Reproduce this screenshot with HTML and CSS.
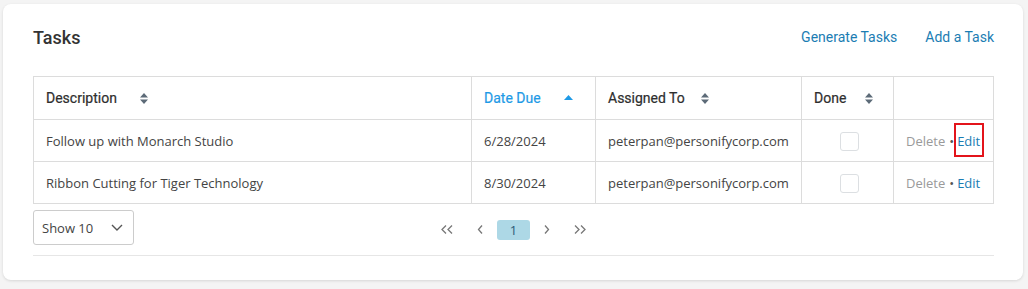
FILE: index.html
```html
<!DOCTYPE html>
<html lang="en">
  <head>
    <meta charset="UTF-8" />
    <meta name="viewport" content="width=device-width, initial-scale=1.0" />
    <title>Tasks</title>
    <link rel="stylesheet" href="styles.css">
  </head>
  <body>
    <div class="card">
      <div class="card-head">
        <h2 class="title">Tasks</h2>
        <div class="head-links">
          <a class="link" href="#">Generate Tasks</a>
          <a class="link" href="#">Add a Task</a>
        </div>
      </div>

      <table class="tasks">
        <colgroup>
          <col class="c-desc" />
          <col class="c-date" />
          <col class="c-user" />
          <col class="c-done" />
          <col class="c-act" />
        </colgroup>
        <thead>
          <tr>
            <th>Description<svg class="sort s-desc" width="8" height="11" viewBox="0 0 8 11"><path d="M4 0 L8 4.5 L0 4.5 Z M0 6.5 L8 6.5 L4 11 Z" /></svg></th>
            <th class="sorted">Date Due<svg class="sort asc" width="9" height="6" viewBox="0 0 9 6"><path d="M4.5 0 L9 5 L0 5 Z" /></svg></th>
            <th>Assigned To<svg class="sort s-user" width="8" height="11" viewBox="0 0 8 11"><path d="M4 0 L8 4.5 L0 4.5 Z M0 6.5 L8 6.5 L4 11 Z" /></svg></th>
            <th>Done<svg class="sort s-done" width="8" height="11" viewBox="0 0 8 11"><path d="M4 0 L8 4.5 L0 4.5 Z M0 6.5 L8 6.5 L4 11 Z" /></svg></th>
            <th></th>
          </tr>
        </thead>
        <tbody>
          <tr>
            <td>Follow up with Monarch Studio</td>
            <td>6/28/2024</td>
            <td>peterpan@personifycorp.com</td>
            <td class="done"><span class="check"></span></td>
            <td class="actions"><a class="del" href="#">Delete</a><span class="dot">•</span><a class="edit marked" href="#">Edit</a></td>
          </tr>
          <tr>
            <td>Ribbon Cutting for Tiger Technology</td>
            <td>8/30/2024</td>
            <td>peterpan@personifycorp.com</td>
            <td class="done"><span class="check"></span></td>
            <td class="actions"><a class="del" href="#">Delete</a><span class="dot">•</span><a class="edit" href="#">Edit</a></td>
          </tr>
        </tbody>
      </table>

      <div class="table-foot">
        <div class="page-size">
          <span>Show 10</span>
          <svg width="12" height="7" viewBox="0 0 12 7"><polyline points="1,1 6,6 11,1" /></svg>
        </div>
        <div class="pager">
          <span class="pg"><svg width="13" height="9" viewBox="0 0 13 9"><polyline points="5,0.5 1,4.5 5,8.5" /><polyline points="11,0.5 7,4.5 11,8.5" /></svg></span>
          <span class="pg"><svg width="7" height="9" viewBox="0 0 7 9"><polyline points="5,0.5 1.5,4.5 5,8.5" /></svg></span>
          <span class="pg current">1</span>
          <span class="pg"><svg width="7" height="9" viewBox="0 0 7 9"><polyline points="2,0.5 5.5,4.5 2,8.5" /></svg></span>
          <span class="pg"><svg width="13" height="9" viewBox="0 0 13 9"><polyline points="2,0.5 6,4.5 2,8.5" /><polyline points="8,0.5 12,4.5 8,8.5" /></svg></span>
        </div>
        <div></div>
      </div>
      <hr class="rule" />
    </div>
  </body>
</html>
```

FILE: styles.css
```css
body {
  margin: 0;
  padding: 4px 5px 9px 3px;
  background-color: #f4f4f4;
  font-family: "Open Sans", "Liberation Sans", sans-serif;
  color: #444;
}
.card {
  background: #fff;
  border-radius: 8px;
  box-shadow: 0 1px 3px rgba(0, 0, 0, 0.12);
  padding: 22px 29px 24px 30px;
}
.card-head {
  display: flex;
  align-items: center;
  justify-content: space-between;
  height: 22px;
  margin-bottom: 28px;
}
.title {
  margin: 0;
  font-family: Roboto, "Liberation Sans", sans-serif;
  font-size: 18px;
  font-weight: 500;
  color: #333;
}
.head-links {
  display: flex;
  gap: 28px;
}
.link {
  font-family: Roboto, "Liberation Sans", sans-serif;
  font-size: 14px;
  color: #1b7db3;
  text-decoration: none;
}

/* table */
.tasks {
  width: 100%;
  border-collapse: collapse;
  table-layout: fixed;
}
.c-desc { width: 438px; }
.c-date { width: 124px; }
.c-user { width: 206px; }
.c-done { width: 92px; }
.tasks th,
.tasks td {
  border: 1px solid #dcdcdc;
  padding: 0 12px;
  text-align: left;
  white-space: nowrap;
}
.tasks th {
  height: 42px;
  font-family: Roboto, "Liberation Sans", sans-serif;
  font-size: 14px;
  font-weight: 400;
  color: #2e2e2e;
  -webkit-text-stroke: 0.2px #2e2e2e;
}
.tasks td {
  height: 41px;
  font-size: 13px;
  color: #444;
}
.sort {
  margin-left: 24px;
  vertical-align: -1px;
  fill: #5d6b78;
  stroke: none;
}
.s-desc { margin-left: 23px; }
.s-user { margin-left: 16px; }
.s-done { margin-left: 19px; }
.sorted {
  color: #1e9ae6 !important;
  -webkit-text-stroke: 0.2px #1e9ae6 !important;
}
.sort.asc {
  margin-left: 23px;
  vertical-align: 2px;
  fill: #1e9ae6;
}
.done {
  text-align: center !important;
}
.check {
  display: inline-block;
  width: 17px;
  height: 17px;
  border: 1.5px solid #dcdfe2;
  border-radius: 3px;
  vertical-align: middle;
  margin-left: 3px;
}
.actions a {
  text-decoration: none;
}
.del {
  color: #9a9a9a;
}
.dot {
  color: #555;
  margin: 0 3px 0 4px;
  font-size: 13px;
}
.edit {
  color: #1b7db3;
  position: relative;
}
/* highlight box drawn over the first Edit link */
.marked::after {
  content: "";
  position: absolute;
  left: -3px;
  right: -4px;
  top: -9px;
  bottom: -7px;
  border: 2px solid #e3141b;
}

/* footer */
.table-foot {
  display: grid;
  grid-template-columns: 1fr auto 1fr;
  align-items: center;
  margin-top: 6px;
}
.page-size {
  width: 101px;
  height: 35px;
  box-sizing: border-box;
  border: 1px solid #ccc;
  border-radius: 3px;
  display: flex;
  align-items: center;
  justify-content: space-between;
  padding: 0 10px 0 8px;
  font-size: 13px;
  color: #444;
}
.page-size svg {
  fill: none;
  stroke: #555;
  stroke-width: 1.4;
}
.pager {
  display: flex;
  align-items: center;
  margin-top: 4px;
}
.pg {
  width: 33px;
  height: 20px;
  display: flex;
  align-items: center;
  justify-content: center;
  font-size: 13px;
  color: #2a5a78;
}
.pg svg {
  fill: none;
  stroke: #777;
  stroke-width: 1.3;
}
.pg.current {
  background: #add8e6;
  border-radius: 3px;
}
.rule {
  border: 0;
  border-top: 1px solid #e6e6e6;
  margin: 10px 0 0;
}
```
